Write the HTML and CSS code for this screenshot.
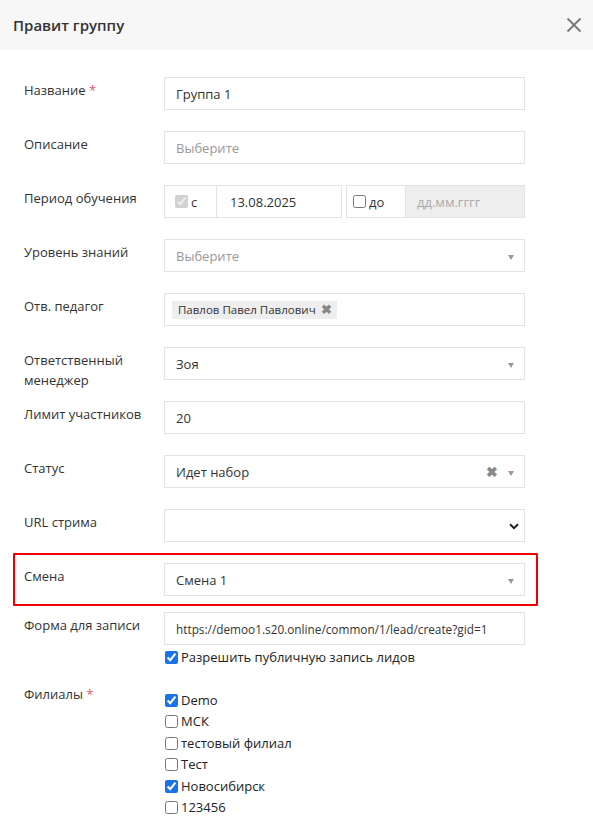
FILE: index.html
```html
<!DOCTYPE html>
<html lang="ru">
<head>
    <meta charset="UTF-8">
    <meta name="viewport" content="width=device-width, initial-scale=1.0">
    <title>Правит группу</title>
    <link rel="stylesheet" href="styles.css">
</head>
<body>

<div class="modal">
    <!-- Шапка окна -->
    <div class="modal-header">
        <h4>Правит группу</h4>
        <span class="close">
            <svg width="16" height="16" viewBox="0 0 16 16"><path d="M1.5 1.5 L14.5 14.5 M14.5 1.5 L1.5 14.5" stroke="#777" stroke-width="1.8" fill="none"/></svg>
        </span>
    </div>

    <div class="modal-body">
        <div class="row">
            <label class="row-label">Название <span class="req">*</span></label>
            <div class="field"><div class="input">Группа 1</div></div>
        </div>

        <div class="row">
            <label class="row-label">Описание</label>
            <div class="field"><div class="input placeholder">Выберите</div></div>
        </div>

        <div class="row">
            <label class="row-label">Период обучения</label>
            <div class="field period">
                <div class="input-group first">
                    <span class="addon"><input type="checkbox" checked disabled> с</span>
                    <div class="input">13.08.2025</div>
                </div>
                <div class="input-group second">
                    <span class="addon"><input type="checkbox"> до</span>
                    <div class="input disabled">дд.мм.гггг</div>
                </div>
            </div>
        </div>

        <div class="row">
            <label class="row-label">Уровень знаний</label>
            <div class="field"><div class="input select placeholder">Выберите<span class="caret"></span></div></div>
        </div>

        <div class="row">
            <label class="row-label">Отв. педагог</label>
            <div class="field"><div class="input tags"><span class="tag">Павлов Павел Павлович <b>&#10006;</b></span></div></div>
        </div>

        <div class="row">
            <label class="row-label">Ответственный менеджер</label>
            <div class="field"><div class="input select">Зоя<span class="caret"></span></div></div>
        </div>

        <div class="row">
            <label class="row-label">Лимит участников</label>
            <div class="field"><div class="input">20</div></div>
        </div>

        <div class="row">
            <label class="row-label">Статус</label>
            <div class="field"><div class="input select">Идет набор<span class="clear">&#10006;</span><span class="caret"></span></div></div>
        </div>

        <div class="row">
            <label class="row-label">URL стрима</label>
            <div class="field">
                <div class="input select native">
                    <svg class="chevron" width="10" height="7" viewBox="0 0 10 7"><path d="M1 1.2 L5 5.2 L9 1.2" stroke="#222" stroke-width="2" fill="none"/></svg>
                </div>
            </div>
        </div>

        <div class="row marked">
            <label class="row-label">Смена</label>
            <div class="field"><div class="input select">Смена 1<span class="caret"></span></div></div>
        </div>

        <div class="row short">
            <label class="row-label">Форма для записи</label>
            <div class="field">
                <div class="input link">https://demoo1.s20.online/common/1/lead/create?gid=1</div>
                <label class="check public"><input type="checkbox" checked> Разрешить публичную запись лидов</label>
            </div>
        </div>

        <div class="row">
            <label class="row-label">Филиалы <span class="req">*</span></label>
            <div class="field branches">
                <label class="check"><input type="checkbox" checked> Demo</label>
                <label class="check"><input type="checkbox"> МСК</label>
                <label class="check"><input type="checkbox"> тестовый филиал</label>
                <label class="check"><input type="checkbox"> Тест</label>
                <label class="check"><input type="checkbox" checked> Новосибирск</label>
                <label class="check"><input type="checkbox"> 123456</label>
            </div>
        </div>
    </div>
</div>

</body>
</html>
```

FILE: styles.css
```css
/* Общие стили */
body {
    margin: 0;
    font-family: 'Open Sans', 'Noto Sans', sans-serif;
    font-size: 13px;
    color: #333;
    background: #fff;
}

/* Шапка модального окна */
.modal-header {
    height: 50px;
    background: #f7f7f7;
    display: flex;
    align-items: center;
    justify-content: space-between;
    padding: 0 11px 0 13px;
}
.modal-header h4 {
    margin: 0;
    font-size: 15px;
    font-weight: 600;
    color: #333;
}
.close {
    display: flex;
}

/* Тело формы */
.modal-body {
    padding: 27px 0 0 24px;
}
.row {
    display: grid;
    grid-template-columns: 140px 361px;
    width: 501px;
    margin-bottom: 21px;
}
.row.marked {
    position: relative;
    margin-bottom: 16px;
}
.row.marked::after {
    content: "";
    position: absolute;
    left: -11px;
    right: -13px;
    top: -10px;
    bottom: -10px;
    border: 2px solid #e00;
    border-radius: 1px;
}
.row.short {
    margin-bottom: 12px;
}
.row-label {
    box-sizing: border-box;
    height: 33px;
    padding-top: 3px;
    line-height: 20px;
    color: #333;
}
.req {
    color: #e0556a;
}

/* Поля ввода */
.input {
    box-sizing: border-box;
    height: 33px;
    border: 1px solid #e3e3e3;
    padding: 0 11px;
    display: flex;
    align-items: center;
    color: #333;
    background: #fff;
    white-space: nowrap;
    overflow: hidden;
}
.input.link {
    font-size: 11.8px;
}
.input.placeholder {
    color: #999;
}
.input.disabled {
    background: #eee;
    color: #aaa;
}
.select {
    position: relative;
}
.caret {
    position: absolute;
    right: 10px;
    top: 15px;
    border-left: 3.5px solid transparent;
    border-right: 3.5px solid transparent;
    border-top: 5px solid #999;
}
.clear {
    position: absolute;
    right: 26px;
    top: 6px;
    color: #888;
    font-size: 14px;
    font-weight: bold;
}
.chevron {
    position: absolute;
    right: 5px;
    top: 13px;
}

/* Теги в мультиселекте */
.tags {
    padding: 0 7px;
}
.tag {
    background: #eee;
    font-size: 11.5px;
    padding: 1px 5px 1px 6px;
    line-height: 16px;
}
.tag b {
    color: #888;
    font-size: 12.5px;
    margin-left: 2px;
}

/* Период обучения */
.period {
    display: flex;
    gap: 4px;
}
.input-group {
    display: flex;
}
.input-group.first {
    width: 178px;
}
.input-group.second {
    width: 179px;
}
.addon {
    box-sizing: border-box;
    height: 33px;
    border: 1px solid #e3e3e3;
    border-right: none;
    display: flex;
    align-items: center;
    padding: 0 8px 0 10px;
    white-space: nowrap;
}
.input-group.first .addon {
    width: 52px;
}
.input-group.second .addon {
    width: 59px;
    padding-left: 6px;
}
.input-group .input {
    flex: 1;
}
.input-group.first .input {
    padding-left: 13px;
}
.addon input {
    margin: 0 3px 0 0;
    width: 13px;
    height: 13px;
}

/* Чекбоксы */
.check {
    display: flex;
    align-items: center;
    line-height: 21.5px;
    color: #222;
    white-space: nowrap;
}
.check input {
    margin: 0 3px 0 1px;
    width: 13px;
    height: 13px;
    accent-color: #1a73e8;
}
.check.public {
    margin-top: 2px;
}
.branches {
    padding-top: 9px;
}
```
